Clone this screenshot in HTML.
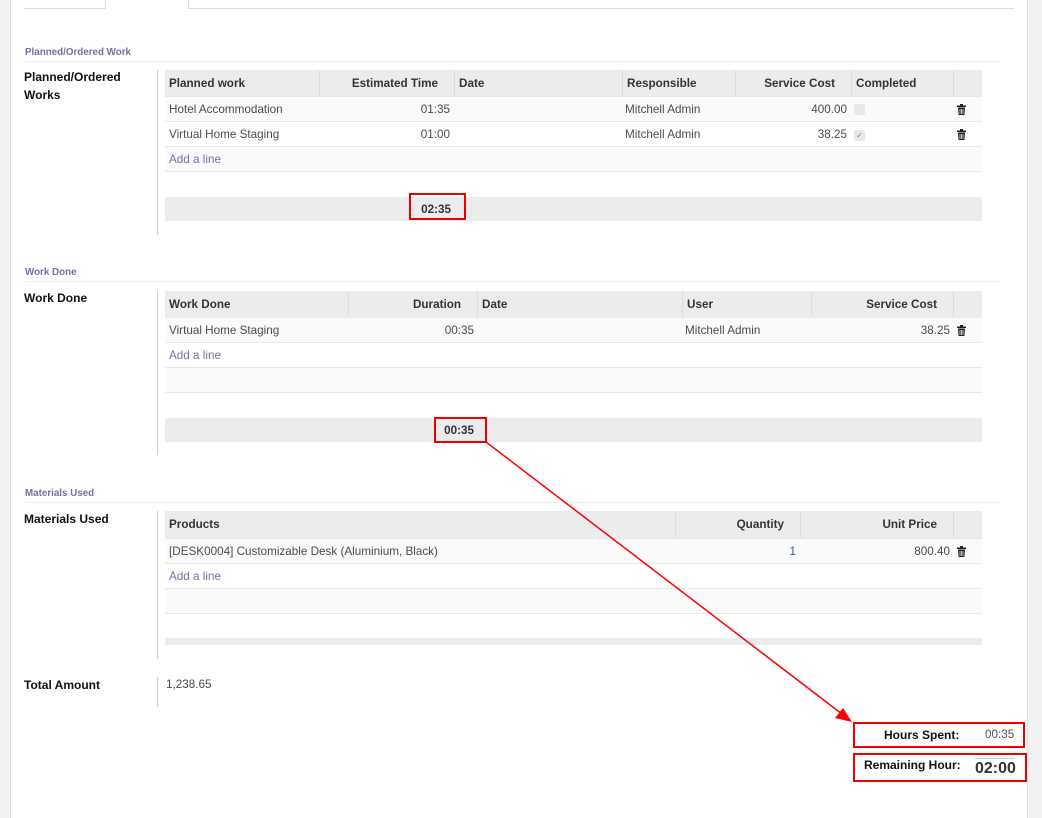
<!DOCTYPE html><html><head><style>
*{margin:0;padding:0;box-sizing:border-box}
body{width:1042px;height:818px;background:#f2f2f2;font-family:"Liberation Sans",sans-serif;font-size:11.7px;color:#4c4c4c;position:relative;overflow:hidden}
.a{position:absolute}
.sheet{left:10px;top:0;width:1018px;height:818px;background:#fff;border-left:1px solid #ddd;border-right:1px solid #ddd}
.sec{color:#7c6ca5;font-size:9.8px;font-weight:bold}
.hr{height:1px;background:#eee;left:25px;width:975px}
.lbl{color:#111;font-weight:bold;font-size:12px;line-height:18px}
.vl{width:1px;background:#ccc;left:157px}
.row{left:165px;width:817px;border-bottom:1px solid #e8e8e8}
.hd{background:#ececec;font-weight:bold;color:#333}
.c{position:absolute;top:0;height:100%;padding:0 4px;display:flex;align-items:center;white-space:nowrap}
.r{justify-content:flex-end}
.hd .r{padding-right:16px}
.bl{border-left:1px solid #ddd}
.add{color:#7c6ca5}
.red{border:2px solid #e00;background:transparent}
.tr{position:absolute;top:7px;width:9px;height:11px}
</style></head><body>
<svg width="0" height="0" style="position:absolute"><symbol id="t" viewBox="0 0 9 11"><rect x="0" y="1.5" width="9" height="1.5" fill="#222"/><rect x="3" y="0" width="3" height="2" fill="#222"/><path d="M1 3.5h7l-.6 7.5h-5.8z" fill="#222"/><path d="M3 5v5M4.5 5v5M6 5v5" stroke="#fff" stroke-width=".7"/></symbol></svg>
<div class="a sheet"></div>
<div class="a" style="left:24px;top:0;width:82px;height:9px;border-right:1px solid #ddd;border-bottom:1px solid #ddd"></div>
<div class="a" style="left:188px;top:0;width:826px;height:9px;border-left:1px solid #ddd;border-bottom:1px solid #ddd"></div>

<div class="a sec" style="left:25px;top:47px">Planned/Ordered Work</div>
<div class="a hr" style="top:61px"></div>
<div class="a lbl" style="left:24px;top:68px">Planned/Ordered<br>Works</div>
<div class="a vl" style="top:70px;height:165px"></div>
<div class="a row hd" style="top:70px;height:27px">
<div class="c" style="left:0;width:154px">Planned work</div>
<div class="c r bl" style="left:154px;width:135px">Estimated Time</div>
<div class="c bl" style="left:289px;width:168px">Date</div>
<div class="c bl" style="left:457px;width:113px">Responsible</div>
<div class="c r bl" style="left:570px;width:116px">Service Cost</div>
<div class="c bl" style="left:686px;width:102px">Completed</div>
<div class="c bl" style="left:788px;width:29px"></div></div>
<div class="a row" style="top:97px;height:25px;background:#fafafa">
<div class="c" style="left:0">Hotel Accommodation</div>
<div class="c r" style="left:154px;width:135px">01:35</div>
<div class="c" style="left:456px">Mitchell Admin</div>
<div class="c r" style="left:570px;width:116px">400.00</div>
<div class="a" style="left:689px;top:7px;width:11px;height:11px;background:#e8e8e8;border-radius:2px"></div>
<svg class="tr" style="left:792px"><use href="#t"/></svg></div>
<div class="a row" style="top:122px;height:25px">
<div class="c" style="left:0">Virtual Home Staging</div>
<div class="c r" style="left:154px;width:135px">01:00</div>
<div class="c" style="left:456px">Mitchell Admin</div>
<div class="c r" style="left:570px;width:116px">38.25</div>
<div class="a" style="left:689px;top:8px;width:11px;height:11px;background:#e8e8e8;border-radius:2px;font-size:8px;text-align:center;line-height:11px;color:#777">✓</div>
<svg class="tr" style="left:792px"><use href="#t"/></svg></div>
<div class="a row" style="top:147px;height:25px;background:#fafafa"><div class="c add" style="left:0">Add a line</div></div>
<div class="a row" style="top:197px;height:24px;background:#ececec;border:0"><div class="c r" style="left:154px;width:135px;padding-right:3px;font-weight:bold;color:#333">02:35</div></div>
<div class="a red" style="left:409px;top:193px;width:57px;height:27px"></div>

<div class="a sec" style="left:25px;top:267px">Work Done</div>
<div class="a hr" style="top:281px"></div>
<div class="a lbl" style="left:24px;top:289px">Work Done</div>
<div class="a vl" style="top:291px;height:164px"></div>
<div class="a row hd" style="top:291px;height:27px">
<div class="c" style="left:0;width:183px">Work Done</div>
<div class="c r bl" style="left:183px;width:129px">Duration</div>
<div class="c bl" style="left:312px;width:205px">Date</div>
<div class="c bl" style="left:517px;width:129px">User</div>
<div class="c r bl" style="left:646px;width:142px">Service Cost</div>
<div class="c bl" style="left:788px;width:29px"></div></div>
<div class="a row" style="top:318px;height:25px;background:#fafafa">
<div class="c" style="left:0">Virtual Home Staging</div>
<div class="c r" style="left:183px;width:129px;padding-right:3px">00:35</div>
<div class="c" style="left:516px">Mitchell Admin</div>
<div class="c r" style="left:646px;width:142px;padding-right:3px">38.25</div>
<svg class="tr" style="left:792px"><use href="#t"/></svg></div>
<div class="a row" style="top:343px;height:25px"><div class="c add" style="left:0">Add a line</div></div>
<div class="a row" style="top:368px;height:25px;background:#fafafa"></div>
<div class="a row" style="top:418px;height:24px;background:#ececec;border:0"><div class="c r" style="left:183px;width:129px;padding-right:3px;font-weight:bold;color:#333">00:35</div></div>
<div class="a red" style="left:434px;top:417px;width:53px;height:26px"></div>

<div class="a sec" style="left:25px;top:488px">Materials Used</div>
<div class="a hr" style="top:502px"></div>
<div class="a lbl" style="left:24px;top:510px">Materials Used</div>
<div class="a vl" style="top:511px;height:148px"></div>
<div class="a row hd" style="top:511px;height:28px">
<div class="c" style="left:0;width:510px">Products</div>
<div class="c r bl" style="left:510px;width:125px">Quantity</div>
<div class="c r bl" style="left:635px;width:153px">Unit Price</div>
<div class="c bl" style="left:788px;width:29px"></div></div>
<div class="a row" style="top:539px;height:25px;background:#fafafa">
<div class="c" style="left:0">[DESK0004] Customizable Desk (Aluminium, Black)</div>
<div class="c r" style="left:510px;width:125px;color:#3a5a8a">1</div>
<div class="c r" style="left:635px;width:153px;padding-right:3px">800.40</div>
<svg class="tr" style="left:792px"><use href="#t"/></svg></div>
<div class="a row" style="top:564px;height:25px"><div class="c add" style="left:0">Add a line</div></div>
<div class="a row" style="top:589px;height:25px;background:#fafafa"></div>
<div class="a row" style="top:638px;height:7px;background:#ececec;border:0"></div>

<div class="a lbl" style="left:24px;top:676px">Total Amount</div>
<div class="a vl" style="top:677px;height:30px"></div>
<div class="a" style="left:166px;top:678px">1,238.65</div>

<svg class="a" style="left:0;top:0" width="1042" height="818"><line x1="486" y1="442" x2="842" y2="714" stroke="#f00" stroke-width="1.5"/><polygon points="852,722 835,718 843,708" fill="#f00"/></svg>
<div class="a red" style="left:853px;top:722px;width:172px;height:26px"></div>
<div class="a lbl" style="left:884px;top:726px">Hours Spent:</div>
<div class="a" style="left:985px;top:728px;color:#555">00:35</div>
<div class="a red" style="left:853px;top:753px;width:174px;height:29px"></div>
<div class="a lbl" style="left:864px;top:756px">Remaining Hour:</div>
<div class="a" style="left:975px;top:758px;width:40px;border-top:1px solid #ccc"></div>
<div class="a" style="left:975px;top:760px;font-size:16px;font-weight:bold;color:#333">02:00</div>
</body></html>
